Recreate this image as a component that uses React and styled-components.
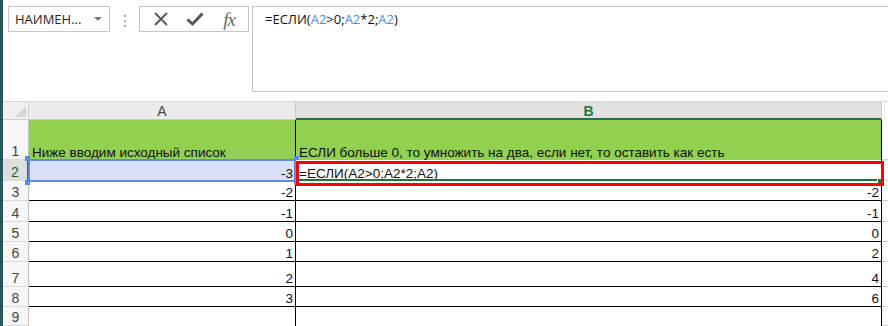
import React from "react";
import styled, { createGlobalStyle } from "styled-components";

const Global = createGlobalStyle`
  html, body { margin: 0; padding: 0; background: #fff; }
  body { width: 888px; height: 326px; overflow: hidden; font-family: "Liberation Sans", Arial, sans-serif; }
`;

const Window = styled.div`
  display: flex;
  width: 888px;
  height: 326px;
  overflow: hidden;
  background: #fff;
`;

const SideStrip = styled.div`
  width: 3px;
  flex: none;
  background: #24585f;
`;

const Main = styled.div`
  flex: 1;
  min-width: 0;
  display: flex;
  flex-direction: column;
`;

const FormulaBar = styled.div`
  display: flex;
  align-items: flex-start;
  padding: 6px 0 0 5px;
  height: 101px;
  box-sizing: border-box;
`;

const NameBox = styled.div`
  width: 102px;
  height: 26px;
  box-sizing: border-box;
  border: 1px solid #c6c6c6;
  display: flex;
  align-items: center;
  justify-content: space-between;
  padding: 0 7px 0 6px;
  font-family: "Open Sans", "Liberation Sans", sans-serif;
  font-size: 13px;
  color: #262626;
`;

const Caret = styled.span`
  width: 0;
  height: 0;
  border-left: 4px solid transparent;
  border-right: 4px solid transparent;
  border-top: 4px solid #7a7a7a;
`;

const Grip = styled.div`
  width: 2px;
  margin: 9px 13px 0 14px;
  display: flex;
  flex-direction: column;
  gap: 3px;
`;

const GripDot = styled.span`
  width: 2px;
  height: 2px;
  background: #a8a8a8;
`;

const ButtonBox = styled.div`
  width: 110px;
  height: 26px;
  box-sizing: border-box;
  border: 1px solid #c6c6c6;
  display: flex;
  align-items: center;
  padding: 0 0 0 12px;
`;

const IconSlot = styled.span`
  width: ${(p) => p.$w}px;
  display: flex;
  align-items: center;
  justify-content: center;
  color: #5a5a5a;
`;

const Fx = styled.span`
  font-family: "Liberation Serif", "DejaVu Serif", serif;
  font-style: italic;
  font-size: 19px;
  color: #6a6a6a;
  letter-spacing: -1px;
  line-height: 1;
`;

const FormulaInput = styled.div`
  flex: 1;
  margin-left: 3px;
  margin-right: -2px;
  height: 86px;
  box-sizing: border-box;
  border: 1px solid #c6c6c6;
  padding: 3px 0 0 12px;
  font-family: "Open Sans", "Liberation Sans", sans-serif;
  font-size: 13px;
  color: #111;
`;

const Ref = styled.span`
  color: #4f8ae8;
`;

const Sheet = styled.div`
  display: grid;
  grid-template-columns: 26px 267px 586px 1fr;
  grid-template-rows: 19px 40px 21px 20px 21px 20px 20px 25px 20px 1fr;
  flex: 1;
  font-size: 13.5px;
  color: #111;
`;

const Corner = styled.div`
  background: #f0f0f0;
  border-right: 1px solid #cfcfcf;
  border-bottom: 1px solid #cfcfcf;
  border-top: 1px solid #d6d6d6;
  box-sizing: border-box;
  display: flex;
  align-items: flex-end;
  justify-content: flex-end;
  padding: 0 2px 2px 0;
`;

const CornerTriangle = styled.span`
  width: 0;
  height: 0;
  border-left: 11px solid transparent;
  border-bottom: 11px solid #d5d5d5;
`;

const ColHeader = styled.div`
  box-sizing: border-box;
  background: ${(p) => (p.$active ? "#e1e1e1" : "#ececec")};
  border-top: 1px solid #d6d6d6;
  border-right: 1px solid #c9c9c9;
  border-bottom: ${(p) => (p.$active ? "2px solid #217346" : "1px solid #c9c9c9")};
  display: flex;
  align-items: center;
  justify-content: center;
  padding-top: 1px;
  font-size: 14px;
  color: ${(p) => (p.$active ? "#217346" : "#444")};
  font-weight: ${(p) => (p.$active ? "bold" : "normal")};
`;

const HeaderFiller = styled.div`
  border-top: 1px solid #d6d6d6;
  border-left: 1px solid #e8e8e8;
  margin-left: 2px;
  background: #fff;
`;

const RowHeader = styled.div`
  box-sizing: border-box;
  background: ${(p) => (p.$active ? "#dedede" : "#f7f7f7")};
  border-right: ${(p) => (p.$active ? "2px solid #217346" : "1px solid #c4c4c4")};
  border-bottom: 1px solid #dadada;
  display: flex;
  align-items: flex-end;
  justify-content: center;
  padding-bottom: 0;
  font-size: 14px;
  color: ${(p) => (p.$active ? "#1e5c3a" : "#444")};
`;

const Cell = styled.div`
  position: relative;
  box-sizing: border-box;
  background: ${(p) => p.$bg || "#fff"};
  border-right: 1px solid #000;
  border-bottom: ${(p) => (p.$noBottom ? "none" : "1px solid #000")};
  display: flex;
  align-items: flex-end;
  justify-content: ${(p) => (p.$right ? "flex-end" : "flex-start")};
  padding: 0 2px 0 3px;
  white-space: nowrap;
  z-index: ${(p) => (p.$top ? 2 : 0)};
`;

const Overflow = styled.div`
  border-bottom: 1px dashed #cfcfcf;
`;

const RefBorder = styled.span`
  position: absolute;
  inset: -1px;
  border: 2px solid #5b8ce8;
  pointer-events: none;
`;

const Handle = styled.span`
  position: absolute;
  width: 5px;
  height: 5px;
  background: #5b8ce8;
  ${(p) => (p.$t ? "top: -4px;" : "bottom: -4px;")}
  ${(p) => (p.$l ? "left: -4px;" : "right: -4px;")}
`;

const ActiveOutline = styled.span`
  position: absolute;
  left: 0;
  right: 0;
  bottom: 0;
  height: 2px;
  background: #217346;
`;

const FillHandle = styled.span`
  position: absolute;
  right: -2px;
  bottom: -3px;
  width: 4px;
  height: 4px;
  background: #217346;
  border: 1px solid #fff;
`;

const Annotation = styled.span`
  position: absolute;
  left: 0;
  top: 1px;
  right: -3px;
  bottom: -5px;
  border: 3px solid #ff0000;
  pointer-events: none;
`;

const CrossIcon = () => (
  <svg width="16" height="16" viewBox="0 0 16 16">
    <path d="M2 2 L14 14 M14 2 L2 14" stroke="#555" strokeWidth="1.8" fill="none" />
  </svg>
);

const CheckIcon = () => (
  <svg width="18" height="16" viewBox="0 0 18 16">
    <path d="M1.5 8.5 L6.5 13 L16.5 2.5" stroke="#555" strokeWidth="3" fill="none" strokeLinejoin="miter" />
  </svg>
);

const rows = [
  { n: 3, a: "-2", b: "-2" },
  { n: 4, a: "-1", b: "-1" },
  { n: 5, a: "0", b: "0" },
  { n: 6, a: "1", b: "2" },
  { n: 7, a: "2", b: "4" },
  { n: 8, a: "3", b: "6" },
];

const Formula = () => (
  <>
    =ЕСЛИ(<Ref>A2</Ref>&gt;0;<Ref>A2</Ref>*2;<Ref>A2</Ref>)
  </>
);

export default function App() {
  return (
    <>
      <Global />
      <Window>
        <SideStrip />
        <Main>
          <FormulaBar>
            <NameBox>
              <span>НАИМЕН...</span>
              <Caret />
            </NameBox>
            <Grip>
              <GripDot />
              <GripDot />
              <GripDot />
            </Grip>
            <ButtonBox>
              <IconSlot $w={18}>
                <CrossIcon />
              </IconSlot>
              <IconSlot $w={50}>
                <CheckIcon />
              </IconSlot>
              <IconSlot $w={18}>
                <Fx>fx</Fx>
              </IconSlot>
            </ButtonBox>
            <FormulaInput>
              <Formula />
            </FormulaInput>
          </FormulaBar>
          <Sheet>
            <Corner>
              <CornerTriangle />
            </Corner>
            <ColHeader>A</ColHeader>
            <ColHeader $active>B</ColHeader>
            <HeaderFiller />

            <RowHeader>1</RowHeader>
            <Cell $bg="#92d050" $noBottom>Ниже вводим исходный список</Cell>
            <Cell $bg="#92d050" $noBottom>ЕСЛИ больше 0, то умножить на два, если нет, то оставить как есть</Cell>
            <Overflow />

            <RowHeader $active>2</RowHeader>
            <Cell $bg="#d9e1f6" $right $noBottom $top>
              -3
              <RefBorder />
              <Handle $t $l />
              <Handle $t />
              <Handle $l />
              <Handle />
            </Cell>
            <Cell $noBottom $top>
              =ЕСЛИ(A2&gt;0;A2*2;A2)
              <ActiveOutline />
              <FillHandle />
              <Annotation />
            </Cell>
            <Overflow />

            {rows.map((r) => (
              <React.Fragment key={r.n}>
                <RowHeader>{r.n}</RowHeader>
                <Cell $right>{r.a}</Cell>
                <Cell $right>{r.b}</Cell>
                <Overflow />
              </React.Fragment>
            ))}

            <RowHeader>9</RowHeader>
            <Cell $noBottom />
            <Cell $noBottom />
            <Overflow />
          </Sheet>
        </Main>
      </Window>
    </>
  );
}
